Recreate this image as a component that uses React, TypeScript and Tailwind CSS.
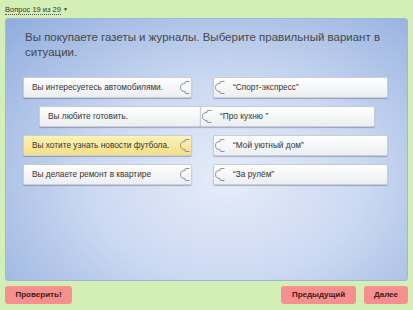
import React from "react";

const font = { fontFamily: '"Liberation Sans", Arial, sans-serif' };

function Knob({ className = "" }: { className?: string }) {
  return (
    <svg width="11" height="17" viewBox="0 0 11 17" className={className}>
      <path
        d="M10.5 2.5 H7 Q5.5 2.5 6 4.5 Q1.5 4.5 1.5 8.5 Q1.5 12.5 6 12.5 Q5.5 14.5 7 14.5 H10.5"
        fill="none"
        stroke="#8e939c"
        strokeWidth="1"
        strokeLinejoin="round"
      />
    </svg>
  );
}

function Card({
  text,
  width,
  side,
  yellow = false,
}: {
  text: string;
  width: number;
  side: "left" | "right" | "none";
  yellow?: boolean;
}) {
  const label = (
    <span className="pl-[8px] text-[8.3px] text-[#333] flex-grow truncate">{text}</span>
  );
  return (
    <div
      style={{ width }}
      className={`h-[21px] flex items-center rounded-[2px] border border-[#c9cdd4] shadow-[0_1px_1px_rgba(60,70,100,0.35)] ${
        yellow
          ? "bg-gradient-to-b from-[#fdf3b6] to-[#f4df84]"
          : "bg-gradient-to-b from-white to-[#eceef1]"
      }`}
    >
      {side === "right" ? (
        <>
          {label}
          <Knob className="mr-[1px]" />
        </>
      ) : side === "left" ? (
        <>
          <Knob className="ml-[0px]" />
          {label}
        </>
      ) : (
        label
      )}
    </div>
  );
}

export default function App() {
  return (
    <div style={font} className="w-[413px] h-[310px] bg-[#d4efb6] flex flex-col overflow-hidden">
      <div className="h-[18px] flex items-center pl-[5px] pt-[1px]">
        <span className="text-[7.5px] text-[#333] border-b border-dotted border-[#555] leading-[9px]">
          Вопрос 19 из 29
        </span>
        <span className="text-[5px] text-[#333] ml-[2px]">▼</span>
      </div>
      <div className="mx-[5px] h-[263px] rounded-[3px] border border-[#9fb7d9] bg-[radial-gradient(ellipse_at_55%_62%,#e6ecf9_0%,#cad8f1_45%,#90acdd_100%)] flex flex-col">
        <p className="pl-[19px] pr-[14px] pt-[11px] text-[11.5px] leading-[15px] text-[#474747]">
          Вы покупаете газеты и журналы. Выберите правильный вариант в ситуации.
        </p>
        <div className="mt-[17px] flex flex-col gap-[8px]">
          <div className="flex">
            <div className="ml-[17px]">
              <Card text="Вы интересуетесь автомобилями." width={169} side="right" />
            </div>
            <div className="ml-[21px]">
              <Card text="“Спорт-экспресс”" width={175} side="left" />
            </div>
          </div>
          <div className="flex">
            <div className="ml-[33px]">
              <Card text="Вы любите готовить." width={162} side="none" />
            </div>
            <div className="-ml-[1px]">
              <Card text="“Про кухню ”" width={175} side="left" />
            </div>
          </div>
          <div className="flex">
            <div className="ml-[17px]">
              <Card text="Вы хотите узнать новости футбола." width={169} side="right" yellow />
            </div>
            <div className="ml-[21px]">
              <Card text="“Мой уютный дом”" width={175} side="left" />
            </div>
          </div>
          <div className="flex">
            <div className="ml-[17px]">
              <Card text="Вы делаете ремонт в квартире" width={169} side="right" />
            </div>
            <div className="ml-[21px]">
              <Card text="“За рулём”" width={175} side="left" />
            </div>
          </div>
        </div>
      </div>
      <div className="flex items-center justify-between px-[5px] mt-[5px]">
        <button className="w-[67px] h-[18px] rounded-[3px] bg-[#f88f8f] text-[8px] font-bold text-[#3a2020]">
          Проверить!
        </button>
        <div className="flex gap-[8px]">
          <button className="w-[75px] h-[18px] rounded-[3px] bg-[#f88f8f] text-[8px] font-bold text-[#3a2020]">
            Предыдущий
          </button>
          <button className="w-[44px] h-[18px] rounded-[3px] bg-[#f88f8f] text-[8px] font-bold text-[#3a2020]">
            Далее
          </button>
        </div>
      </div>
    </div>
  );
}
